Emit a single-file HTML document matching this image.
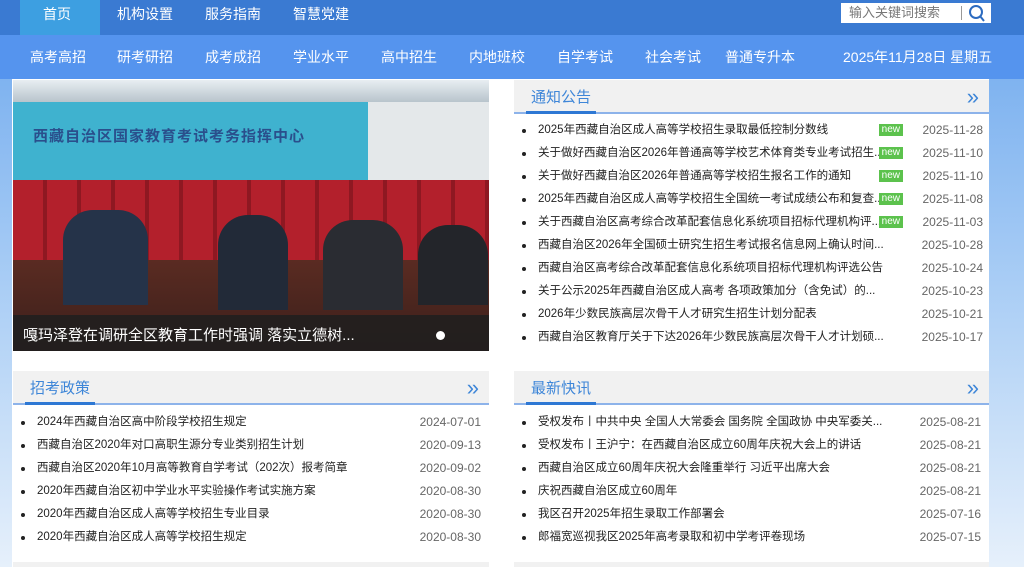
<!DOCTYPE html>
<html><head><meta charset="utf-8"><style>
*{margin:0;padding:0;box-sizing:border-box}
body{width:1024px;height:567px;overflow:hidden;position:relative;font-family:"Liberation Sans","Noto Sans CJK SC",sans-serif;background:linear-gradient(#6fa9ee 0%,#a9cdf5 50%,#e6f0fb 100%)}
.a{position:absolute}
.top{left:0;top:0;width:1024px;height:35px;background:#3a7ad2}
.top span{position:absolute;top:0;height:35px;line-height:28px;color:#fff;font-size:14px}
.nav2{left:0;top:35px;width:1024px;height:44px;background:#5594ee}
.nav2 span{position:absolute;top:12px;color:#fff;font-size:14px}
.main{left:12px;top:79px;width:977px;height:488px;background:#fff}
.hd{position:absolute;height:34px;background:#f1f1f1;border-bottom:2px solid #8db3ea}
.hd b{position:absolute;left:17px;top:6px;font-weight:normal;font-size:15px;color:#3e86d8}
.hd i{position:absolute;left:12px;bottom:-2px;width:70px;height:3px;background:#2e78d4}
.hd em{position:absolute;right:10px;top:4px;font-style:normal;color:#3e86d8;font-size:22px;line-height:26px}
ul{position:absolute;list-style:none;font-size:11.5px;color:#222}
li{height:23px;line-height:23px;position:relative;padding-left:24px;white-space:nowrap}
li:before{content:"";position:absolute;left:8px;top:10px;width:4px;height:4px;border-radius:2px;background:#222}
li span{display:block;overflow:hidden;width:345px}
li s{text-decoration:none;position:absolute;right:0;top:0;color:#666;font-size:12px}
li u{text-decoration:none;position:absolute;right:80px;top:5px;height:12px;line-height:12px;background:#5cc24d;color:#fff;font-size:10px;padding:0 3px}
</style></head><body>
<div class="a top">
<div class="a" style="left:20px;top:0;width:80px;height:35px;background:#3d9fe1"></div>
<span style="left:43px">首页</span><span style="left:117px">机构设置</span><span style="left:205px">服务指南</span><span style="left:293px">智慧党建</span>
<div class="a" style="left:841px;top:3px;width:150px;height:20px;background:#fff"></div>
<span style="left:849px;color:#777;font-size:13px;line-height:26px">输入关键词搜索</span>
<div class="a" style="left:961px;top:6px;width:1px;height:14px;background:#999"></div>
<svg class="a" style="left:967px;top:4px" width="20" height="18"><circle cx="9" cy="8" r="6" fill="none" stroke="#2c6bc0" stroke-width="2"/><line x1="13" y1="12" x2="17" y2="17" stroke="#2c6bc0" stroke-width="2"/></svg>
</div>
<div class="a nav2">
<span style="left:30px">高考高招</span><span style="left:117px">研考研招</span><span style="left:205px">成考成招</span><span style="left:293px">学业水平</span><span style="left:381px">高中招生</span><span style="left:469px">内地班校</span><span style="left:557px">自学考试</span><span style="left:645px">社会考试</span><span style="left:725px">普通专升本</span><span style="left:843px">2025年11月28日 星期五</span>
</div>
<div class="a main"></div>
<!-- image -->
<div class="a" style="left:13px;top:80px;width:476px;height:271px;overflow:hidden;background:#3fb2cf">
<div class="a" style="left:0;top:0;width:476px;height:22px;background:linear-gradient(#e8eef2,#b8c4cc)"></div>
<div class="a" style="left:355px;top:22px;width:121px;height:100px;background:#e4e8ea"></div>
<div class="a" style="left:20px;top:45px;font-size:15px;font-weight:bold;color:#2a4f8c;letter-spacing:1px">西藏自治区国家教育考试考务指挥中心</div>
<div class="a" style="left:0;top:100px;width:476px;height:90px;background:repeating-linear-gradient(90deg,#b3202c 0 30px,#8e1822 30px 34px)"></div>
<div class="a" style="left:0;top:180px;width:476px;height:95px;background:linear-gradient(#5a2b22,#3a1f1a)"></div>
<div class="a" style="left:50px;top:130px;width:85px;height:95px;background:#253349;border-radius:30px 30px 0 0"></div>
<div class="a" style="left:205px;top:135px;width:70px;height:95px;background:#222a38;border-radius:30px 30px 0 0"></div>
<div class="a" style="left:310px;top:140px;width:80px;height:90px;background:#2a2c32;border-radius:30px 30px 0 0"></div>
<div class="a" style="left:405px;top:145px;width:70px;height:80px;background:#23252a;border-radius:30px 30px 0 0"></div>
<div class="a" style="left:0;top:235px;width:476px;height:36px;background:rgba(30,30,30,.85)"></div>
<div class="a" style="left:10px;top:244px;color:#fff;font-size:15px">嘎玛泽登在调研全区教育工作时强调 落实立德树...</div>
<div class="a" style="left:423px;top:251px;width:9px;height:9px;border-radius:5px;background:#fff"></div>
</div>
<!-- 通知公告 -->
<div class="hd" style="left:514px;top:80px;width:475px"><b>通知公告</b><i></i><em>»</em></div>
<ul style="left:514px;top:119px;width:469px">
<li><span>2025年西藏自治区成人高等学校招生录取最低控制分数线</span><u>new</u><s>2025-11-28</s></li>
<li><span>关于做好西藏自治区2026年普通高等学校艺术体育类专业考试招生...</span><u>new</u><s>2025-11-10</s></li>
<li><span>关于做好西藏自治区2026年普通高等学校招生报名工作的通知</span><u>new</u><s>2025-11-10</s></li>
<li><span>2025年西藏自治区成人高等学校招生全国统一考试成绩公布和复查...</span><u>new</u><s>2025-11-08</s></li>
<li><span>关于西藏自治区高考综合改革配套信息化系统项目招标代理机构评...</span><u>new</u><s>2025-11-03</s></li>
<li>西藏自治区2026年全国硕士研究生招生考试报名信息网上确认时间...<s>2025-10-28</s></li>
<li>西藏自治区高考综合改革配套信息化系统项目招标代理机构评选公告<s>2025-10-24</s></li>
<li>关于公示2025年西藏自治区成人高考 各项政策加分（含免试）的...<s>2025-10-23</s></li>
<li>2026年少数民族高层次骨干人才研究生招生计划分配表<s>2025-10-21</s></li>
<li>西藏自治区教育厅关于下达2026年少数民族高层次骨干人才计划硕...<s>2025-10-17</s></li>
</ul>
<!-- 招考政策 -->
<div class="hd" style="left:13px;top:371px;width:476px"><b>招考政策</b><i></i><em>»</em></div>
<ul style="left:13px;top:411px;width:468px">
<li>2024年西藏自治区高中阶段学校招生规定<s>2024-07-01</s></li>
<li>西藏自治区2020年对口高职生源分专业类别招生计划<s>2020-09-13</s></li>
<li>西藏自治区2020年10月高等教育自学考试（202次）报考简章<s>2020-09-02</s></li>
<li>2020年西藏自治区初中学业水平实验操作考试实施方案<s>2020-08-30</s></li>
<li>2020年西藏自治区成人高等学校招生专业目录<s>2020-08-30</s></li>
<li>2020年西藏自治区成人高等学校招生规定<s>2020-08-30</s></li>
</ul>
<!-- 最新快讯 -->
<div class="hd" style="left:514px;top:371px;width:475px"><b>最新快讯</b><i></i><em>»</em></div>
<ul style="left:514px;top:411px;width:467px">
<li>受权发布丨中共中央 全国人大常委会 国务院 全国政协 中央军委关...<s>2025-08-21</s></li>
<li>受权发布丨王沪宁：在西藏自治区成立60周年庆祝大会上的讲话<s>2025-08-21</s></li>
<li>西藏自治区成立60周年庆祝大会隆重举行 习近平出席大会<s>2025-08-21</s></li>
<li>庆祝西藏自治区成立60周年<s>2025-08-21</s></li>
<li>我区召开2025年招生录取工作部署会<s>2025-07-16</s></li>
<li>郎福宽巡视我区2025年高考录取和初中学考评卷现场<s>2025-07-15</s></li>
</ul>
<div class="a" style="left:13px;top:562px;width:476px;height:5px;background:#f1f1f1"></div>
<div class="a" style="left:514px;top:562px;width:475px;height:5px;background:#f1f1f1"></div>
</body></html>
